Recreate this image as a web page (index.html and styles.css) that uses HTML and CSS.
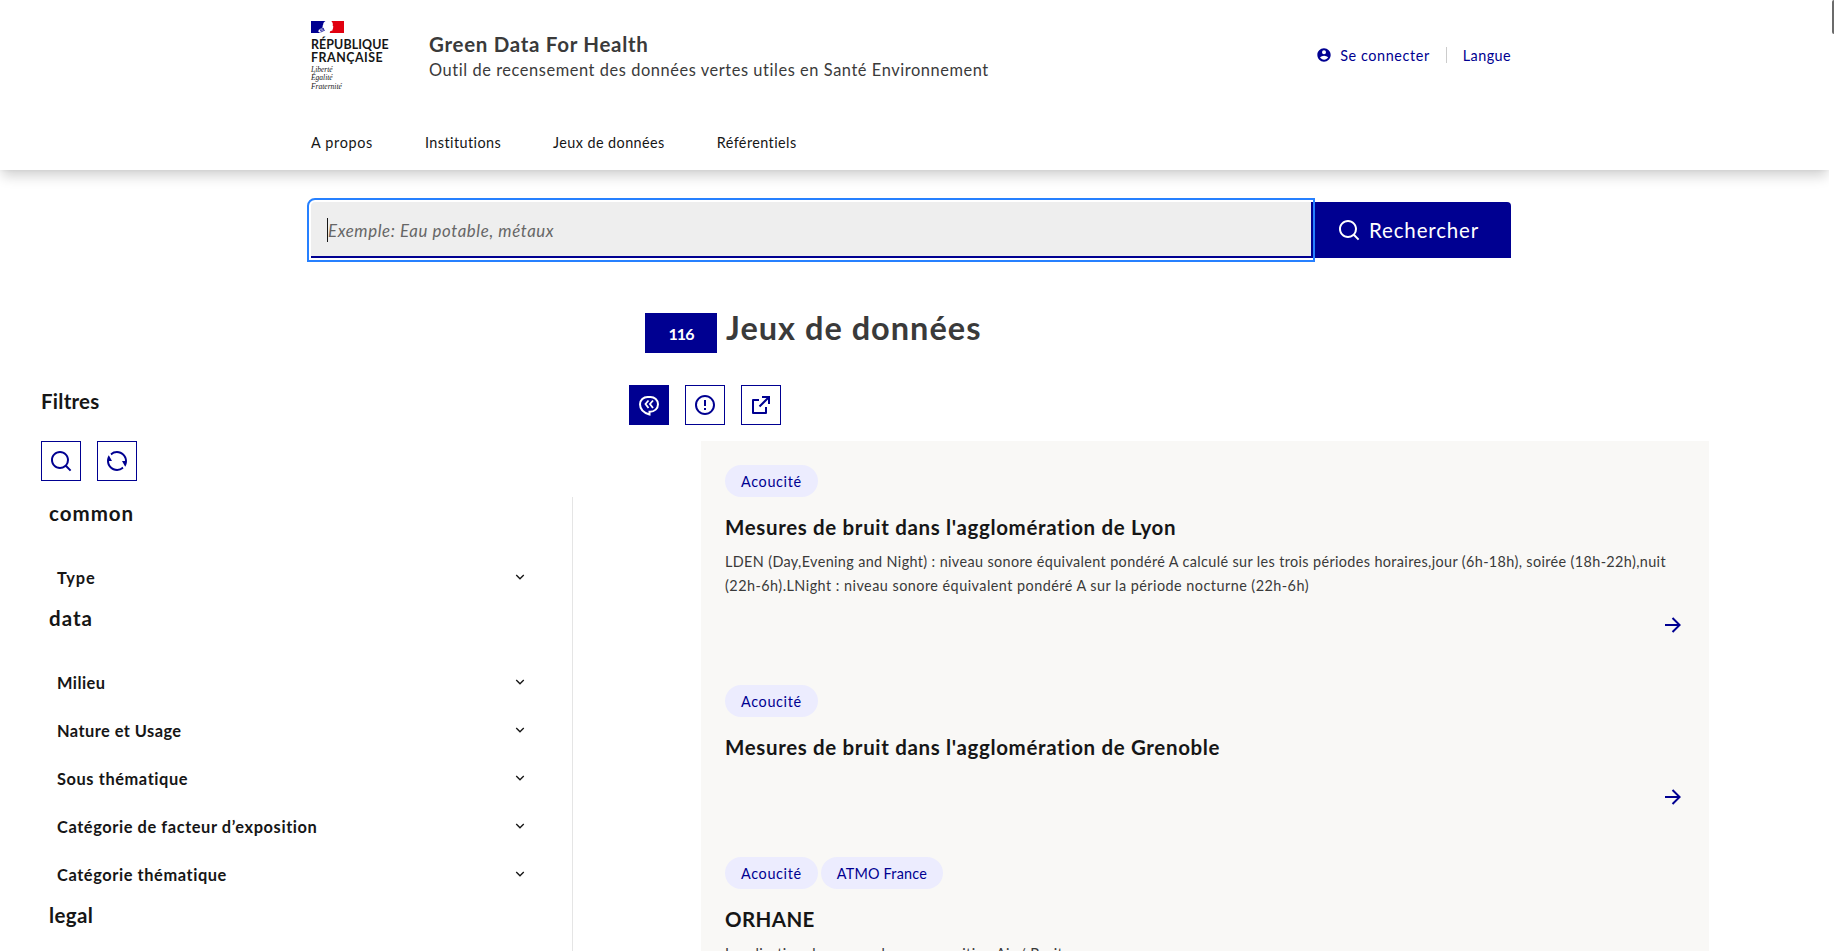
FILE: index.html
```html
<!DOCTYPE html>
<html lang="fr">
<head>
<meta charset="utf-8">
<title>Green Data For Health</title>
<link rel="stylesheet" href="styles.css">
</head>
<body>
<svg class="sprite" aria-hidden="true">
  <symbol id="i-search" viewBox="0 0 24 24"><path d="M18.031 16.617l4.283 4.282-1.415 1.415-4.282-4.283A8.96 8.96 0 0 1 11 20c-4.968 0-9-4.032-9-9s4.032-9 9-9 9 4.032 9 9a8.96 8.96 0 0 1-1.969 5.617zm-2.006-.742A6.977 6.977 0 0 0 18 11c0-3.868-3.133-7-7-7-3.868 0-7 3.132-7 7 0 3.867 3.132 7 7 7a6.977 6.977 0 0 0 4.875-1.975l.15-.15z"/></symbol>
  <symbol id="i-refresh" viewBox="0 0 24 24"><path d="M5.463 4.433A9.961 9.961 0 0 1 12 2c5.523 0 10 4.477 10 10 0 2.136-.67 4.116-1.81 5.740L17 12h3A8 8 0 0 0 6.460 6.228l-.997-1.795zm13.074 15.134A9.961 9.961 0 0 1 12 22C6.477 22 2 17.523 2 12c0-2.136.67-4.116 1.810-5.740L7 12H4a8 8 0 0 0 13.540 5.772l.997 1.795z"/></symbol>
  <symbol id="i-warning" viewBox="0 0 24 24"><path d="M12 22C6.477 22 2 17.523 2 12S6.477 2 12 2s10 4.477 10 10-4.477 10-10 10zm0-2a8 8 0 1 0 0-16 8 8 0 0 0 0 16zm-1-5h2v2h-2v-2zm0-8h2v6h-2V7z"/></symbol>
  <symbol id="i-external" viewBox="0 0 24 24"><path d="M10 6v2H5v11h11v-5h2v6a1 1 0 0 1-1 1H4a1 1 0 0 1-1-1V7a1 1 0 0 1 1-1h6zm11-3v8h-2V6.413l-7.793 7.794-1.414-1.414L17.585 5H13V3h8z"/></symbol>
  <symbol id="i-quote" viewBox="0 0 24 24"><path fill="none" stroke="currentColor" stroke-width="2" d="M13 18.800h-.5v2.700C9 20.500 3 17.500 3 11.300 3 7 6.600 4 10.500 4h3C17.500 4 21 7 21 11.300c0 4.200-3.500 7.500-8 7.500z"/><path fill="none" stroke="currentColor" stroke-width="1.800" d="M11.500 7.500L8.500 11l3 4M16 7.500L13 11l3 4"/></symbol>
  <symbol id="i-account" viewBox="0 0 24 24"><path fill-rule="evenodd" d="M12 2c5.520 0 10 4.480 10 10s-4.480 10-10 10S2 17.520 2 12 6.480 2 12 2zM6.023 15.416C7.491 17.606 9.695 19 12.160 19c2.464 0 4.669-1.393 6.136-3.584A8.968 8.968 0 0 0 12.160 13a8.968 8.968 0 0 0-6.137 2.416zM12 11a3 3 0 1 0 0-6 3 3 0 0 0 0 6z"/></symbol>
  <symbol id="i-arrow" viewBox="0 0 24 24"><path d="M16.172 11l-5.364-5.364 1.414-1.414L20 12l-7.778 7.778-1.414-1.414L16.172 13H4v-2z"/></symbol>
  <symbol id="i-down" viewBox="0 0 24 24"><path d="M12 13.172l4.950-4.950 1.414 1.414L12 16 5.636 9.636 7.050 8.222z"/></symbol>
</svg>

<header class="header">
  <div class="brand-row">
    <div class="logo">
      <svg class="flag" viewBox="0 0 33 12"><path fill="#000091" d="M0 0h14.500c-1.500.8-2.300 2.200-2.300 3.600-.5 1.200-1 1.800-.3 2.600L8 8.500 7.200 10.500l2 1.500H0z"/><path fill="#e1000f" d="M20.300 0H33v12H19c-.7-1.300.3-2.300 1.600-2.300 1.300 0 1-.9 1-1.700.6-.4.600-.9.300-1.300.9-.6.4-1.300-.2-2.200.5-1.700-.2-3.300-1.400-4.500z"/><path fill="none" stroke="#000091" stroke-width=".8" d="M8.500 8.300l4.500-1M9 9.800l4-1.500M9.500 11.200l4.500-2.200"/></svg>
      <div class="rf"><div class="rf-a">RÉPUBLIQUE</div><div class="rf-b">FRANÇAISE</div></div>
      <div class="motto">Liberté<br>Égalité<br>Fraternité</div>
    </div>
    <div class="service">
      <div class="service-title">Green Data For Health</div>
      <div class="service-tagline">Outil de recensement des données vertes utiles en Santé Environnement</div>
    </div>
    <div class="tools">
      <a class="tool login"><svg class="icon-sm"><use href="#i-account"/></svg><span>Se connecter</span></a>
      <span class="separator"></span>
      <a class="tool">Langue</a>
    </div>
  </div>
  <nav class="nav">
    <a class="nav-about">A propos</a><a>Institutions</a><a>Jeux de données</a><a>Référentiels</a>
  </nav>
</header>

<div class="search">
  <div class="search-input"><span class="caret"></span><span class="placeholder">Exemple: Eau potable, métaux</span></div>
  <div class="search-button"><svg class="icon"><use href="#i-search"/></svg><span>Rechercher</span></div>
</div>

<div class="columns">
  <aside class="sidebar">
    <h2 class="filters-title">Filtres</h2>
    <div class="buttons">
      <span class="square"><svg class="icon"><use href="#i-search"/></svg></span>
      <span class="square"><svg class="icon"><use href="#i-refresh"/></svg></span>
    </div>
    <div class="filters">
      <section class="group">
        <h3 class="group-title wide">common</h3>
        <div class="item"><span class="wide">Type</span><svg class="chevron"><use href="#i-down"/></svg></div>
      </section>
      <section class="group">
        <h3 class="group-title wide">data</h3>
        <div class="item"><span class="tight">Milieu</span><svg class="chevron"><use href="#i-down"/></svg></div>
        <div class="item"><span class="tight">Nature et Usage</span><svg class="chevron"><use href="#i-down"/></svg></div>
        <div class="item"><span>Sous thématique</span><svg class="chevron"><use href="#i-down"/></svg></div>
        <div class="item"><span>Catégorie de facteur d’exposition</span><svg class="chevron"><use href="#i-down"/></svg></div>
        <div class="item"><span>Catégorie thématique</span><svg class="chevron"><use href="#i-down"/></svg></div>
      </section>
      <section class="group">
        <h3 class="group-title tight">legal</h3>
      </section>
    </div>
  </aside>
  <main class="main">
    <div class="heading"><span class="count">116</span><h1 class="title">Jeux de données</h1></div>
    <div class="buttons tabs">
      <span class="square active"><svg class="icon"><use href="#i-quote"/></svg></span>
      <span class="square"><svg class="icon"><use href="#i-warning"/></svg></span>
      <span class="square"><svg class="icon"><use href="#i-external"/></svg></span>
    </div>
    <div class="cards">
      <article class="card">
        <div class="tags"><span class="tag">Acoucité</span></div>
        <h2 class="card-title">Mesures de bruit dans l'agglomération de Lyon</h2>
        <p class="desc">LDEN (Day,Evening and Night) : niveau sonore équivalent pondéré A calculé sur les trois périodes horaires,jour (6h-18h), soirée (18h-22h),nuit<br><span class="loose">(22h-6h).LNight : niveau sonore équivalent pondéré A sur la période nocturne (22h-6h)</span></p>
        <svg class="icon arrow"><use href="#i-arrow"/></svg>
      </article>
      <article class="card">
        <div class="tags"><span class="tag">Acoucité</span></div>
        <h2 class="card-title">Mesures de bruit dans l'agglomération de Grenoble</h2>
        <svg class="icon arrow"><use href="#i-arrow"/></svg>
      </article>
      <article class="card">
        <div class="tags"><span class="tag">Acoucité</span><span class="tag tag-caps">ATMO France</span></div>
        <h2 class="card-title caps">ORHANE</h2>
        <p class="desc">Localisation des zones de sur-exposition Air / Bruit</p>
      </article>
    </div>
  </main>
</div>
<div class="scroll-thumb"></div>
</body>
</html>
```

FILE: styles.css
```css
* { box-sizing: border-box; }
html, body { height: 100%; overflow: hidden; }
body { position: relative; margin: 0; background: #fff; color: #161616; font-family: Lato, "Open Sans", sans-serif; font-size: 14.4px; line-height: 24px; letter-spacing: .42px; white-space: nowrap; }
h1, h2, h3, p { margin: 0; }
svg { display: block; fill: currentColor; }
.sprite { position: absolute; width: 0; height: 0; }
.icon { width: 24px; height: 24px; }
.icon-sm { width: 16px; height: 16px; }

.header { width: 1829px; height: 170px; padding: 21px 318px 0 311px; background: #fff; box-shadow: 0 8px 12px -2px rgba(0, 0, 0, .18), 0 0 4px rgba(0, 0, 0, .06); clip-path: inset(0 0 -24px 0); }
.brand-row { display: flex; height: 110px; align-items: flex-start; }
.logo { width: 118px; }
.flag { width: 33px; height: 12px; }
.rf { margin-top: 5px; font-size: 12.4px; font-weight: 700; line-height: 13px; }
.rf-a { letter-spacing: .12px; }
.rf-b { letter-spacing: .52px; }
.motto { margin-top: 2px; font: italic 7.5px/8.300px "Liberation Serif", serif; letter-spacing: 0; }
.service { padding-top: 9px; color: #3a3a3a; }
.service-title { font-size: 20.5px; font-weight: 700; line-height: 28px; letter-spacing: .7px; }
.service-tagline { font-size: 16.4px; letter-spacing: .57px; }
.tools { display: flex; margin-left: auto; padding-top: 23px; color: #000091; }
.tool { display: flex; }
.login { gap: 8px; letter-spacing: .6px; }
.login .icon-sm { margin-top: 3px; }
.separator { width: 1px; height: 16px; margin: 3px 16px 0; background: #ccc; }
.nav { display: flex; gap: 52px; }
.nav-about { letter-spacing: .68px; }

.search { display: flex; width: 1200px; height: 56px; margin: 32px 0 0 311px; }
.search-input { position: relative; display: flex; align-items: center; width: 1000px; padding: 2px 16px 0; border-bottom: 2px solid #000091; border-radius: 4px 0 0; background: #eee; outline: 2px solid #2680ff; outline-offset: 2px; z-index: 1; }
.caret { width: 1px; height: 24px; background: #161616; }
.placeholder { padding-top: 2px; color: #666; font-size: 16.8px; font-style: italic; letter-spacing: .62px; }
.search-button { display: flex; align-items: center; gap: 8px; width: 200px; padding-left: 26px; border-radius: 0 4px 0 0; background: #000091; color: #fff; font-size: 20.5px; letter-spacing: .85px; }

.columns { display: flex; height: 644px; margin-top: 49px; overflow: hidden; }
.sidebar { display: flex; flex-direction: column; width: 573px; padding: 80px 0 0 41px; }
.filters-title { font-size: 20.5px; line-height: 28px; letter-spacing: .25px; }
.buttons { display: flex; gap: 16px; }
.sidebar .buttons { margin-top: 26px; }
.square { display: flex; align-items: center; justify-content: center; width: 40px; height: 40px; border: 1px solid #000091; color: #000091; }
.square.active { background: #000091; color: #fff; }
.filters { flex: 1; margin-top: 16px; border-right: 1px solid #e5e5e5; }
.group { padding-top: 2px; }
.group-title { margin-bottom: 27px; padding-left: 8px; font-size: 20.5px; line-height: 28px; }
.group-title.wide { letter-spacing: 1px; }
.group-title.tight { letter-spacing: .35px; }
.item { display: flex; justify-content: space-between; height: 48px; padding: 12px 44px 12px 16px; font-size: 16.4px; font-weight: 700; letter-spacing: .58px; }
.item .wide { letter-spacing: .85px; }
.item .tight { letter-spacing: .44px; }
.chevron { width: 16px; height: 16px; margin-top: 3px; }

.main { padding-left: 56px; }
.heading { display: flex; gap: 9px; padding-left: 16px; }
.count { width: 72px; height: 40px; margin-top: 6px; background: #000091; color: #fff; font-size: 16px; font-weight: 700; line-height: 42px; letter-spacing: -.9px; text-align: center; }
.title { height: 40px; color: #3a3a3a; font-size: 32.5px; line-height: 42px; letter-spacing: 1px; }
.tabs { margin-top: 32px; }
.cards { width: 1008px; margin: 16px 0 0 72px; background: #f9f8f6; }
.card { display: flex; flex-direction: column; padding: 24px; }
.tags { display: flex; gap: 3px; }
.tag { height: 32px; padding: 5px 16px 3px; border-radius: 16px; background: #ececfe; color: #000091; letter-spacing: .65px; }
.tag-caps { letter-spacing: .22px; }
.card-title { margin: 16px 0 8px; font-size: 20.5px; line-height: 28px; letter-spacing: .65px; }
.card-title.caps { letter-spacing: .4px; }
.desc { padding-top: 1px; margin-bottom: -1px; color: #3a3a3a; letter-spacing: .37px; }
.desc .loose { letter-spacing: .47px; }
.arrow { margin: 16px 0 0 auto; color: #000091; }

.scroll-thumb { position: absolute; top: 0; right: 0; width: 2px; height: 34px; border-radius: 2px 0 0 2px; background: #6b6b6b; }
```
